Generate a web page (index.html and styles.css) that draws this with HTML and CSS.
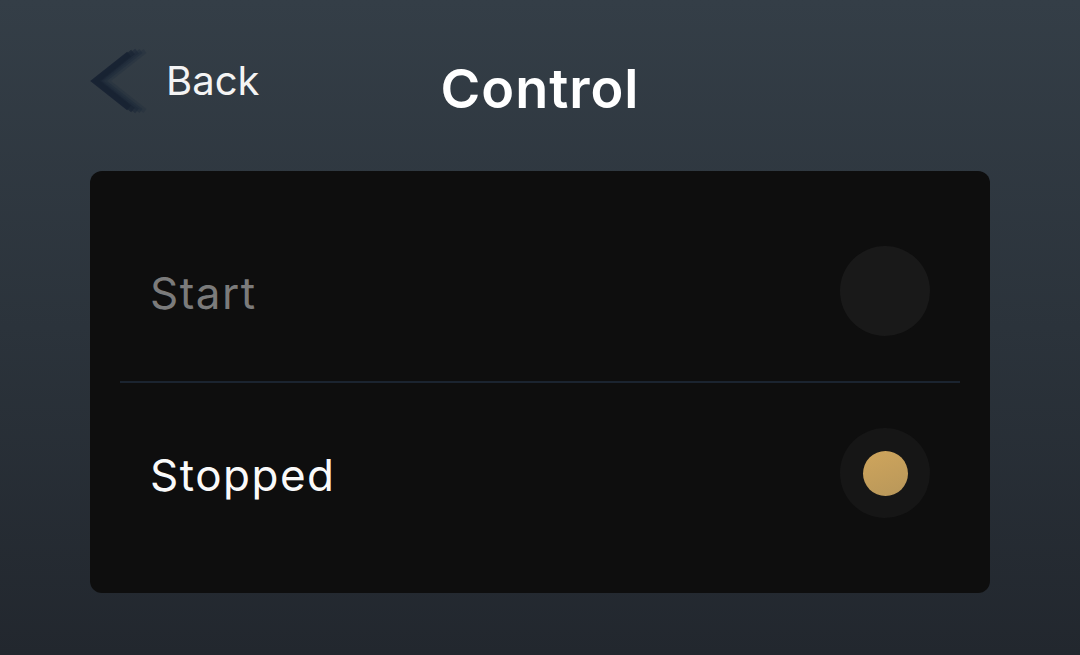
FILE: index.html
```html
<!DOCTYPE html>
<html>
<head>
<meta charset="utf-8">
<link rel="stylesheet" href="styles.css">
</head>
<body>
<div class="page">
  <header class="header">
    <div class="back">
      <svg class="back-icon" width="58" height="66" viewBox="0 0 58 66">
        <g fill="none" stroke-linecap="butt" stroke-linejoin="miter">
          <polyline points="55,3 17,33 55,63" stroke="#1f2c3c" stroke-width="5" opacity="0.3"/>
          <polyline points="51,3 13,33 51,63" stroke="#1d2a3a" stroke-width="5" opacity="0.45"/>
          <polyline points="47,3 9,33 47,63" stroke="#1c2838" stroke-width="6" opacity="0.6"/>
          <polyline points="43,4 7,33 43,62" stroke="#1a2535" stroke-width="6" opacity="0.8"/>
          <polyline points="39,6 5,33 39,60" stroke="#182333" stroke-width="6" opacity="0.95"/>
        </g>
      </svg>
      <span class="back-label">Back</span>
    </div>
    <h1 class="title">Control</h1>
    <div></div>
  </header>
  <main class="card">
    <div class="row">
      <span class="row-label muted">Start</span>
      <span class="dot dot-off"></span>
    </div>
    <div class="divider"></div>
    <div class="row">
      <span class="row-label">Stopped</span>
      <span class="dot dot-on"><span class="dot-inner"></span></span>
    </div>
  </main>
</div>
</body>
</html>
```

FILE: styles.css
```css
html, body {
  margin: 0;
  height: 100%;
}
body {
  background: linear-gradient(180deg, #343e47 0%, #2b333b 50%, #22272e 100%);
  font-family: "Inter", "Liberation Sans", sans-serif;
  color: #fff;
  overflow: hidden;
}
.page {
  padding: 0 90px;
}
.header {
  display: grid;
  grid-template-columns: 1fr auto 1fr;
  align-items: center;
  height: 171px;
  box-sizing: border-box;
  padding-top: 6px;
}
.back {
  display: flex;
  align-items: center;
  gap: 18px;
  margin-top: -16px;
}
.back-icon {
  display: block;
}
.back-label {
  font-size: 40px;
  font-weight: 400;
  letter-spacing: 0;
  color: #f4f4f4;
}
.title {
  margin: 0;
  font-size: 54px;
  font-weight: 600;
  letter-spacing: 1px;
  color: #fff;
}
.card {
  background: #0e0e0e;
  border-radius: 12px;
  padding: 30px 30px;
  height: 422px;
  box-sizing: border-box;
}
.row {
  height: 180px;
  display: flex;
  align-items: center;
  justify-content: space-between;
  padding: 0 30px;
}
.row-label {
  font-size: 44px;
  font-weight: 400;
  color: #fafafa;
  letter-spacing: 1.5px;
  padding-top: 3px;
}
.row-label.muted {
  color: #7b7b7b;
}
.divider {
  height: 2px;
  background: #1b2430;
}
.dot {
  width: 90px;
  height: 90px;
  border-radius: 50%;
  display: flex;
  align-items: center;
  justify-content: center;
}
.dot-off {
  background: #191919;
}
.dot-on {
  background: #161616;
}
.dot-inner {
  width: 45px;
  height: 45px;
  border-radius: 50%;
  background: linear-gradient(160deg, #cfa55c 0%, #b8975a 100%);
}
```
